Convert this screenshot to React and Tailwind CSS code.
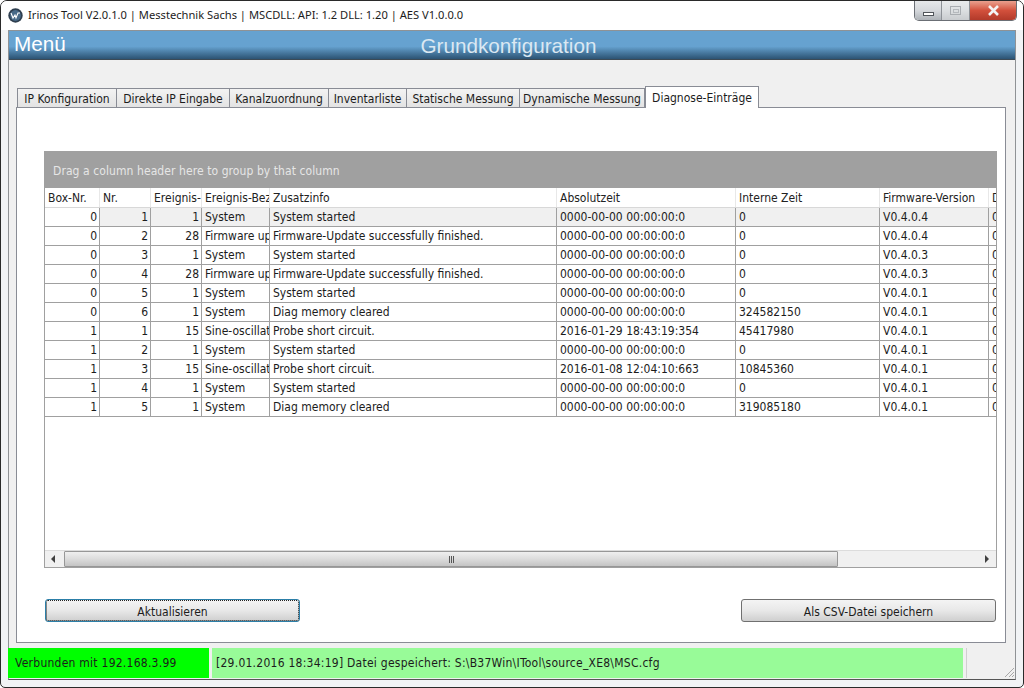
const tabs = [
  { label: 'IP Konfiguration', w: 'w-[100px]' },
  { label: 'Direkte IP Eingabe', w: 'w-[114px]' },
  { label: 'Kanalzuordnung', w: 'w-[100px]' },
  { label: 'Inventarliste', w: 'w-[79px]' },
  { label: 'Statische Messung', w: 'w-[114px]' },
  { label: 'Dynamische Messung', w: 'w-[126px]' }
];

const columns = [
  { label: 'Box-Nr.', w: 'w-[55px]' },
  { label: 'Nr.', w: 'w-[51px]' },
  { label: 'Ereignis-Nr.', w: 'w-[51px]' },
  { label: 'Ereignis-Bezeichnung', w: 'w-[68px]' },
  { label: 'Zusatzinfo', w: 'w-[287px]' },
  { label: 'Absolutzeit', w: 'w-[179px]' },
  { label: 'Interne Zeit', w: 'w-[144px]' },
  { label: 'Firmware-Version', w: 'w-[109px]' },
  { label: 'Daten', w: 'w-[10px]' }
];

const zero = '0000-00-00 00:00:00:0';
const rows = [
  ['0', '1', '1', 'System', 'System started', zero, '0', 'V0.4.0.4'],
  ['0', '2', '28', 'Firmware update', 'Firmware-Update successfully finished.', zero, '0', 'V0.4.0.4'],
  ['0', '3', '1', 'System', 'System started', zero, '0', 'V0.4.0.3'],
  ['0', '4', '28', 'Firmware update', 'Firmware-Update successfully finished.', zero, '0', 'V0.4.0.3'],
  ['0', '5', '1', 'System', 'System started', zero, '0', 'V0.4.0.1'],
  ['0', '6', '1', 'System', 'Diag memory cleared', zero, '324582150', 'V0.4.0.1'],
  ['1', '1', '15', 'Sine-oscillator', 'Probe short circuit.', '2016-01-29 18:43:19:354', '45417980', 'V0.4.0.1'],
  ['1', '2', '1', 'System', 'System started', zero, '0', 'V0.4.0.1'],
  ['1', '3', '15', 'Sine-oscillator', 'Probe short circuit.', '2016-01-08 12:04:10:663', '10845360', 'V0.4.0.1'],
  ['1', '4', '1', 'System', 'System started', zero, '0', 'V0.4.0.1'],
  ['1', '5', '1', 'System', 'Diag memory cleared', zero, '319085180', 'V0.4.0.1']
];

const AppIcon = () => (
  <svg width="15" height="15" viewBox="0 0 15 15" className="shrink-0">
    <circle cx="7.5" cy="7.5" r="7.2" fill="#2f3f50" />
    <circle cx="7.5" cy="7.5" r="5.4" fill="#486a88" />
    <path d="M3 5 L5 10 L7 7 L8 10 L10 5 L12 5" fill="none" stroke="#fff" strokeWidth="1.1" />
  </svg>
);

const WindowButtons = () => (
  <div className="flex h-[20px] self-start border border-t-0 border-[#6b6f75] rounded-b-[5px] overflow-hidden">
    <div className="w-[27px] flex items-end justify-center pb-[4px] bg-gradient-to-b from-[#e6e8ea] via-[#d5d8dc] to-[#aeb3b8] border-r border-[#8d9196]">
      <div className="w-[11px] h-[4px] bg-white border border-[#50555a]" />
    </div>
    <div className="w-[28px] flex items-center justify-center bg-gradient-to-b from-[#e9ebec] via-[#dcdfe1] to-[#c9cccf] border-r border-[#8d9196]">
      <div className="w-[11px] h-[9px] border border-[#a9adb1] flex items-center justify-center">
        <div className="w-[6px] h-[4px] border border-[#b5b9bd]" />
      </div>
    </div>
    <div className="w-[46px] flex items-center justify-center bg-gradient-to-b from-[#e9a08e] via-[#d2503c] to-[#b23a2a]">
      <svg width="13" height="11" viewBox="0 0 13 11">
        <path d="M2 1 L11 10 M11 1 L2 10" stroke="#f3f3f3" strokeWidth="2.6" />
      </svg>
    </div>
  </div>
);

const Tabs = () => (
  <div className="flex items-end h-[22px] ml-[8px] -mb-px relative">
    {tabs.map(t => (
      <div
        key={t.label}
        className={`${t.w} h-[20px] pt-px shrink-0 flex items-center justify-center whitespace-nowrap border border-[#898c95] -mr-px bg-gradient-to-b from-[#f3f3f3] to-[#e3e3e3]`}
      >
        {t.label}
      </div>
    ))}
    <div className="w-[114px] ml-px h-[22px] shrink-0 flex items-center justify-center whitespace-nowrap border border-b-0 border-[#898c95] bg-white">
      Diagnose-Einträge
    </div>
  </div>
);

const Grid = () => (
  <div className="h-[417px] border-b border-r border-l border-[#a0a0a0] flex flex-col bg-white">
    <div className="h-[37px] -mx-px shrink-0 bg-[#a0a0a0] text-[#e6e6e6] pl-[9px] pt-[12px] leading-[16px] tracking-[0.08px]">
      Drag a column header here to group by that column
    </div>
    <div className="flex h-[20px] shrink-0 overflow-hidden border-b border-[#d8d8d8] text-[#222]">
      {columns.map(c => (
        <div key={c.label} className={`${c.w} shrink-0 overflow-hidden whitespace-nowrap pl-[3px] leading-[21px] border-r border-[#e8e8e8]`}>
          {c.label}
        </div>
      ))}
    </div>
    <div className="flex-1">
      {rows.map((r, i) => (
        <div key={i} className="flex h-[19px] overflow-hidden border-b border-[#a0a0a0]">
          {columns.map((c, j) => (
            <div
              key={c.label}
              className={`${c.w} shrink-0 overflow-hidden whitespace-nowrap leading-[18px] border-r border-[#a0a0a0] ${j < 3 ? 'text-right pr-[2px]' : 'pl-[3px]'} ${i === 0 && j > 0 ? 'bg-[#f0f0f0]' : ''}`}
            >
              {j === 8 ? '0' : r[j]}
            </div>
          ))}
        </div>
      ))}
    </div>
    <div className="h-[17px] shrink-0 flex items-stretch bg-[#f0f0f0] border-t border-[#dcdcdc]">
      <div className="w-[19px] flex items-center pl-[6px]">
        <div className="w-0 h-0 border-y-[4px] border-y-transparent border-r-[4px] border-r-[#404040]" />
      </div>
      <div className="w-[774px] flex items-center justify-center border border-[#979797] rounded-[1px] bg-gradient-to-b from-[#efefef] via-[#dcdcdc] to-[#c4c4c4]">
        <div className="flex gap-px">
          <div className="w-px h-[7px] bg-[#555]" />
          <div className="w-px h-[7px] bg-[#555]" />
          <div className="w-px h-[7px] bg-[#555]" />
        </div>
      </div>
      <div className="flex-1 flex items-center justify-end pr-[7px]">
        <div className="w-0 h-0 border-y-[4px] border-y-transparent border-l-[4px] border-l-[#404040]" />
      </div>
    </div>
  </div>
);

const Button = ({ children, focused }) => (
  <div className={`w-[255px] h-[23px] pt-[2px] flex items-center justify-center rounded-[3px] bg-gradient-to-b from-[#f4f4f4] via-[#e8e8e8] to-[#cfcfcf] border ${focused ? 'border-[#2c7fa8] outline-1 outline-dotted -outline-offset-2 outline-[#222]' : 'border-[#707070]'}`}>
    {children}
  </div>
);

const ResizeGrip = () => (
  <svg width="12" height="12" viewBox="0 0 12 12">
    <path d="M11 2 L2 11 M11 6 L6 11 M11 9 L9 11" stroke="#a8a8a8" strokeWidth="1" fill="none" />
  </svg>
);

const App = () => {
  return (
    <div className="w-[1024px] h-[688px] overflow-hidden bg-[#f1f3f5] border border-[#2a2a2a] rounded-t-[7px] rounded-b-[5px] text-[12px] text-[#1c1c1c] font-['DejaVu_Sans_Condensed','DejaVu_Sans',sans-serif] [font-stretch:condensed] flex flex-col">
      {/* Title bar */}
      <div className="h-[29px] shrink-0 flex bg-white pl-[7px] pr-[6px] justify-between">
        <div className="flex items-center gap-[5px] pb-px text-[11.15px] font-['Noto_Sans',sans-serif] [font-stretch:normal]">
          <AppIcon />
          <span>Irinos Tool V2.0.1.0 | Messtechnik Sachs | MSCDLL: API: 1.2 DLL: 1.20 | AES V1.0.0.0</span>
        </div>
        <WindowButtons />
      </div>

      {/* Client area */}
      <div className="flex-1 mx-[7px] mb-[7px] flex flex-col bg-[#f0f0f0] border border-[#8f9295] border-b-[#555]">
        <div className="h-[29px] shrink-0 relative pr-[7px] bg-gradient-to-b from-[#66a2d0] from-55% to-[#2c5373] border-b border-[#3c4a55] text-white flex items-center justify-center font-['Liberation_Sans',sans-serif] [font-stretch:normal] text-[20.7px]">
          <span className="absolute left-[5px] -top-[3px]">Menü</span>
          <span className="text-[#dbe8f2] pt-[2px]">Grundkonfiguration</span>
        </div>

        <div className="pt-[26px] flex-1 flex flex-col">
          <Tabs />
          <div className="h-[536px] ml-[7px] mr-[9px] bg-white border border-[#898c95] pt-[43px] pl-[27px] pr-[8px]">
            <Grid />
            <div className="flex justify-between mt-[31px] px-px">
              <Button focused>Aktualisieren</Button>
              <Button>Als CSV-Datei speichern</Button>
            </div>
          </div>

          {/* Status bar */}
          <div className="flex-1 flex gap-[3px] mt-[5px] mb-[1px] -ml-px tracking-[0.25px]">
            <div className="w-[201px] bg-[#00ff00] flex items-center pl-[7px]">Verbunden mit 192.168.3.99</div>
            <div className="w-[751px] bg-[#98fb98] flex items-center pl-[4px]">[29.01.2016 18:34:19] Datei gespeichert: S:\B37Win\ITool\source_XE8\MSC.cfg</div>
            <div className="flex-1 flex items-end justify-end bg-[#f0f0f0] border-l border-[#d0d0d0]">
              <ResizeGrip />
            </div>
          </div>
        </div>
      </div>
    </div>
  );
};

export default App;
